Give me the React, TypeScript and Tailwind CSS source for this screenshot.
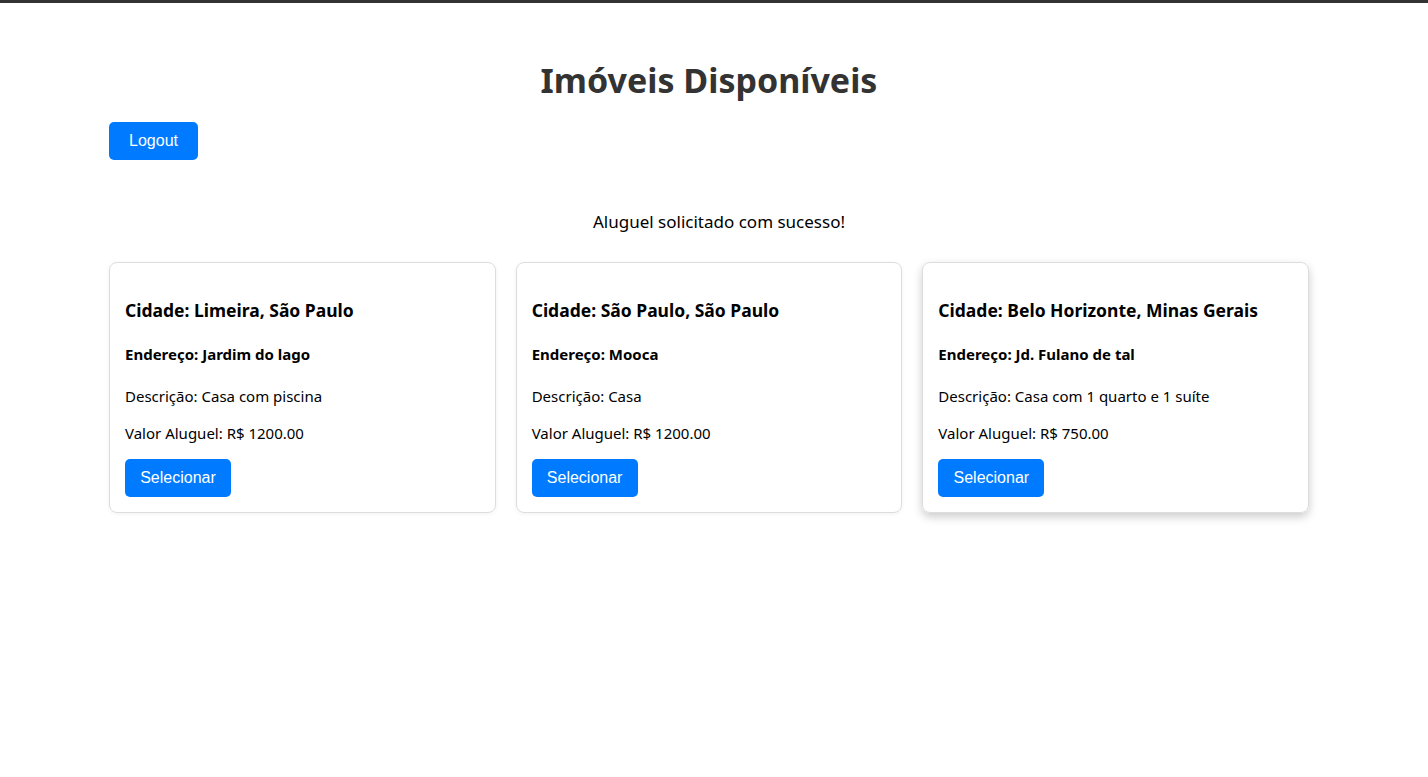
export default function App() {
  const imoveis = [
    {
      cidade: "Limeira, São Paulo",
      endereco: "Jardim do lago",
      descricao: "Casa com piscina",
      valor: "1200.00",
    },
    {
      cidade: "São Paulo, São Paulo",
      endereco: "Mooca",
      descricao: "Casa",
      valor: "1200.00",
    },
    {
      cidade: "Belo Horizonte, Minas Gerais",
      endereco: "Jd. Fulano de tal",
      descricao: "Casa com 1 quarto e 1 suíte",
      valor: "750.00",
    },
  ];

  return (
    <div className="min-h-screen bg-white font-['Noto_Sans',sans-serif] text-black">
      <div className="h-[3px] bg-[#333]" />
      <div className="pr-[10px]">
        <div className="max-w-[1200px] mx-auto">
          <h1 className="mt-[53px] text-center text-[34px] leading-[48px] font-bold text-[#333]">
            Imóveis Disponíveis
          </h1>

          <button className="mt-[18px] w-[89px] h-[38px] rounded-[5px] bg-[#007bff] text-white text-[16px] font-['Liberation_Sans',Arial,sans-serif]">
            Logout
          </button>

          <p className="mt-[51px] text-center text-[17px] leading-[21px] pl-[20px]">
            Aluguel solicitado com sucesso!
          </p>

          <div className="mt-[30px] grid grid-cols-3 gap-[20px]">
            {imoveis.map((imovel, index) => (
              <div
                key={index}
                className={
                  index === 2
                    ? "border border-[#ddd] rounded-[8px] p-[15px] shadow-[0_4px_10px_rgba(0,0,0,0.2)]"
                    : "border border-[#ddd] rounded-[8px] p-[15px] shadow-[0_1px_4px_rgba(0,0,0,0.06)]"
                }
              >
                <h3 className="mt-[20px] text-[17.5px] leading-[25px] font-bold">
                  Cidade: {imovel.cidade}
                </h3>
                <h4 className="mt-[21px] text-[15px] leading-[21px] font-bold">
                  Endereço: {imovel.endereco}
                </h4>
                <p className="mt-[21px] text-[15px] leading-[21px]">
                  Descrição: {imovel.descricao}
                </p>
                <p className="mt-[16px] text-[15px] leading-[21px]">
                  Valor Aluguel: R$ {imovel.valor}
                </p>
                <button className="mt-[15px] w-[106px] h-[38px] rounded-[5px] bg-[#007bff] text-white text-[16px] font-['Liberation_Sans',Arial,sans-serif]">
                  Selecionar
                </button>
              </div>
            ))}
          </div>
        </div>
      </div>
    </div>
  );
}
